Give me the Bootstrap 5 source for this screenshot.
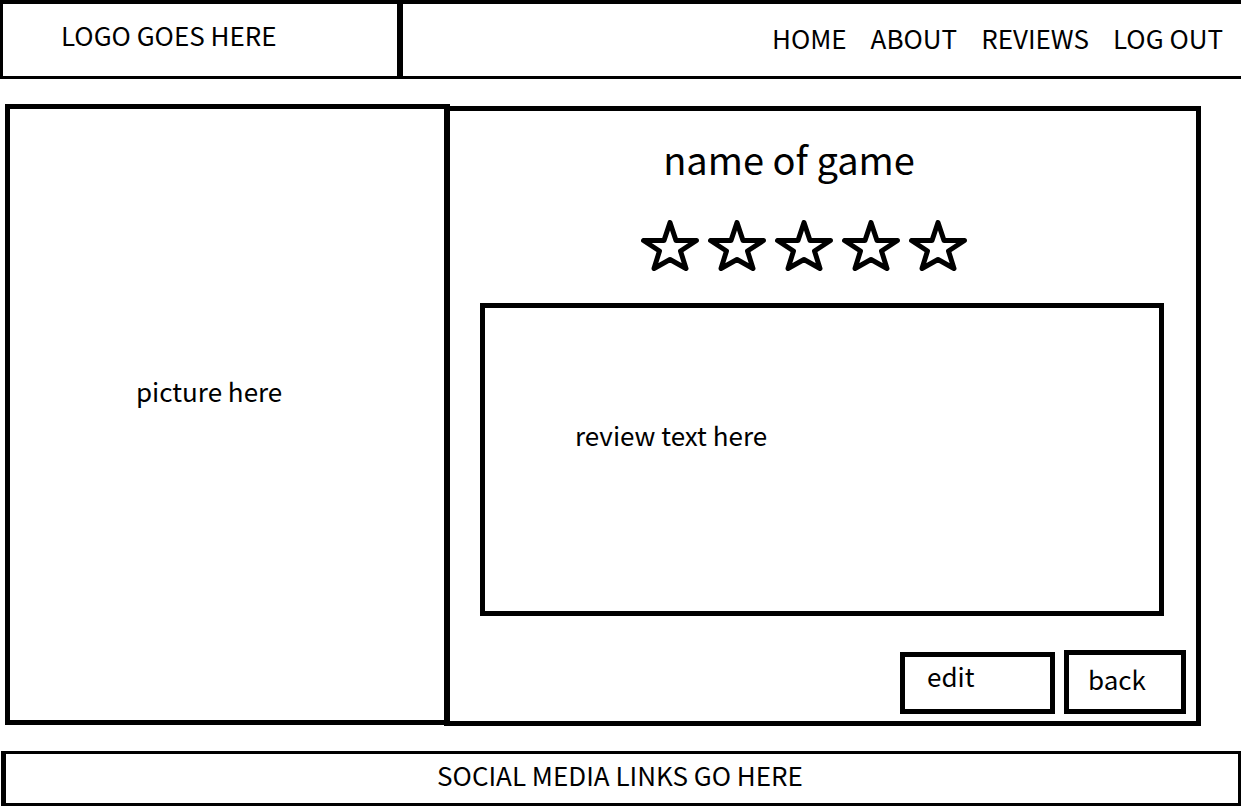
<!DOCTYPE html>
<html lang="en">
<head>
<meta charset="utf-8">
<meta name="viewport" content="width=device-width, initial-scale=1">
<title>Game review</title>
<link href="https://cdn.jsdelivr.net/npm/bootstrap@5.3.0/dist/css/bootstrap.min.css" rel="stylesheet">
<style>
  body { font-family: "Noto Sans CJK SC", "Open Sans", sans-serif; font-size: 26px; line-height: 32px; color: #000; background: #fff; }
  a, a:hover { color: #000; text-decoration: none; }
  .site-header { border: solid #000; border-width: 4px 0 3px 3px; height: 79px; }
  .site-logo { flex: 0 0 400px; border-right: 6px solid #000; padding: 15px 0 0 58px; }
  .site-links { gap: 24px; padding: 18px 18px 0 0; }
  .review-page { display: grid; grid-template-columns: 439fr 757fr; margin: 25px 40px 25px 5px; }
  .picture-pane { border: 5px solid #000; margin: 0 -6px 1px 0; padding: 266px 0 0 126px; }
  .review-pane { border: 5px solid #000; border-left-width: 6px; margin-top: 2px; padding: 24px 10px 7px 30px; }
  .game-title { font-size: 38px; line-height: 48px; margin: 0 88px 37px 0; font-weight: 400; }
  .stars { gap: 9px; margin: 0 58px 32px 0; }
  .stars svg { width: 58px; height: 51px; fill: none; stroke: #000; stroke-width: 5; stroke-linejoin: round; }
  .review-text { border: 5px solid #000; margin: 0 22px 34px 0; padding: 111px 0 0 90px; }
  .actions { gap: 9px; }
  .box-btn { background: #fff; border: 5px solid #000; color: #000; text-align: left; display: flex; }
  .edit-btn { width: 155px; height: 62px; padding: 3px 22px; }
  .back-btn { width: 122px; height: 64px; padding: 8px 19px; }
  .site-footer { border: 3px solid #000; border-left-width: 5px; margin-left: 1px; height: 55px; padding: 5px 4px 0 0; }
</style>
</head>
<body class="d-flex flex-column min-vh-100">
<header class="site-header d-flex">
  <a class="site-logo" href="#">LOGO GOES HERE</a>
  <nav class="site-links d-flex flex-grow-1 justify-content-end" aria-label="Main">
    <a href="#">HOME</a>
    <a href="#">ABOUT</a>
    <a href="#">REVIEWS</a>
    <a href="#">LOG OUT</a>
  </nav>
</header>
<main class="review-page flex-grow-1">
  <section class="picture-pane">picture here</section>
  <section class="review-pane d-flex flex-column">
    <h1 class="game-title text-center">name of game</h1>
    <div class="stars d-flex justify-content-center" role="img" aria-label="Rating">
      <svg viewBox="0 0 58 51"><path d="M29 2.5 35 20.5H55.5L39.5 31 45 48.5 29 39.5 13 48.5 18.5 31 2.5 20.5H23Z"/></svg>
      <svg viewBox="0 0 58 51"><path d="M29 2.5 35 20.5H55.5L39.5 31 45 48.5 29 39.5 13 48.5 18.5 31 2.5 20.5H23Z"/></svg>
      <svg viewBox="0 0 58 51"><path d="M29 2.5 35 20.5H55.5L39.5 31 45 48.5 29 39.5 13 48.5 18.5 31 2.5 20.5H23Z"/></svg>
      <svg viewBox="0 0 58 51"><path d="M29 2.5 35 20.5H55.5L39.5 31 45 48.5 29 39.5 13 48.5 18.5 31 2.5 20.5H23Z"/></svg>
      <svg viewBox="0 0 58 51"><path d="M29 2.5 35 20.5H55.5L39.5 31 45 48.5 29 39.5 13 48.5 18.5 31 2.5 20.5H23Z"/></svg>
    </div>
    <div class="review-text flex-grow-1">review text here</div>
    <div class="actions d-flex justify-content-end align-items-end">
      <button type="button" class="box-btn edit-btn">edit</button>
      <button type="button" class="box-btn back-btn">back</button>
    </div>
  </section>
</main>
<footer class="site-footer text-center">SOCIAL MEDIA LINKS GO HERE</footer>
<script src="https://cdn.jsdelivr.net/npm/bootstrap@5.3.0/dist/js/bootstrap.bundle.min.js"></script>
</body>
</html>
